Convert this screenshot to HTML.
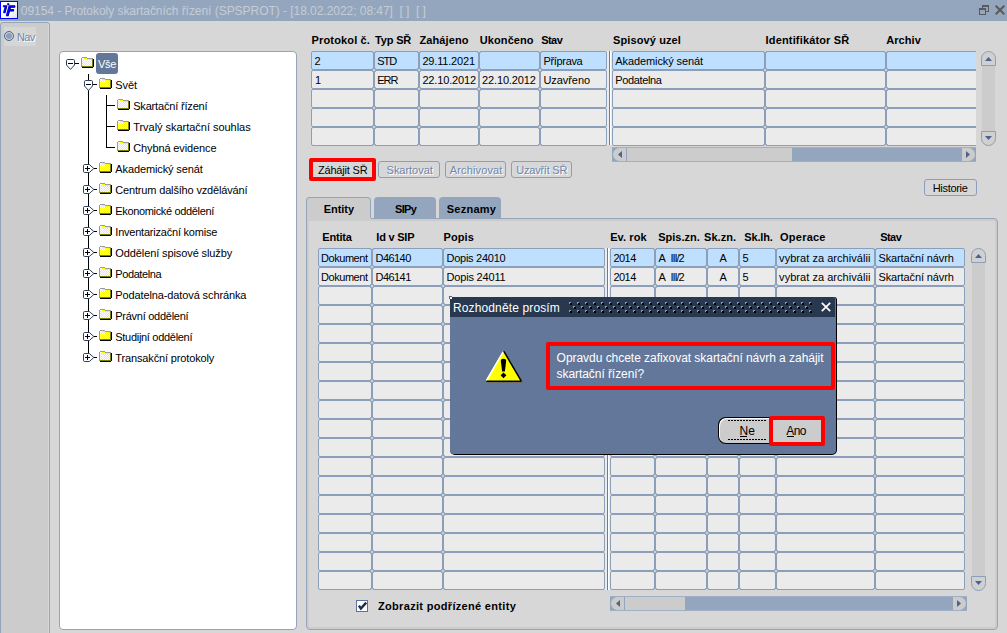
<!DOCTYPE html>
<html><head><meta charset="utf-8"><title>Protokoly</title>
<style>
*{box-sizing:border-box;margin:0;padding:0}
html,body{width:1007px;height:633px;overflow:hidden}
body{position:relative;background:#d7d7d7;font-family:"Liberation Sans",sans-serif;font-size:11px;color:#000}
.abs{position:absolute}
.c{position:absolute;border:1px solid #8b9fba;border-radius:2px;background:#ebebeb;height:19px}
.c.s{background:#bfdfff}
.h{position:absolute;font-weight:bold;white-space:pre;line-height:13px}
.t{position:absolute;white-space:pre;line-height:13px}
.btn{position:absolute;border:1px solid #8b9fba;border-radius:3px;height:17px}
.dis{color:#6f87ad;text-shadow:1px 1px 0 #fff}
.rg{position:absolute;width:1px;background:repeating-linear-gradient(to bottom,transparent 0,transparent 1px,#9cacc4 1px,#9cacc4 2px,transparent 2px,transparent 17px,#9cacc4 17px,#9cacc4 18px,transparent 18px,transparent 19px)}
.vl{position:absolute;width:1px;background:#000}
.hl{position:absolute;height:1px;background:#000}
.red{position:absolute;border:4px solid #ff0000;border-radius:2px}
svg{position:absolute;overflow:visible}
</style></head><body>

<div class="abs" style="left:0;top:0;width:1007px;height:21px;background:#94a6bd"></div>
<div class="abs" style="left:0;top:1px;width:18px;height:18px;border:1px solid #0000ff;background:linear-gradient(135deg,#fff 55%,#e0e0e0)"></div>
<svg style="left:0;top:0" width="18" height="20" viewBox="0 0 18 20"><g fill="#000" transform="translate(0.5,0.5)"><path d="M7.3 3.2 h1.8 l-0.45 1.6 h-1.8 Z"/><path d="M3.1 5.2 h3.9 l-2.1 7.5 h-1.9 l1.65 -5.9 h-2.0 Z"/><path d="M8.7 5.2 h6.4 l-0.55 2 h-4.1 l-0.5 1.8 h3.9 l-0.55 2 h-3.9 l-1.35 4.7 h-2.3 Z"/></g><g fill="#0000ff"><path d="M7.3 3.2 h1.8 l-0.45 1.6 h-1.8 Z"/><path d="M3.1 5.2 h3.9 l-2.1 7.5 h-1.9 l1.65 -5.9 h-2.0 Z"/><path d="M8.7 5.2 h6.4 l-0.55 2 h-4.1 l-0.5 1.8 h3.9 l-0.55 2 h-3.9 l-1.35 4.7 h-2.3 Z"/></g></svg>
<div class="t" style="left:20.80px;top:4px;font-size:12px;line-height:15px;letter-spacing:-0.041px;color:#c6ccd6;">09154 - Protokoly skartačních řízení (SPSPROT) - [18.02.2022; 08:47]  [ ]  [ ]</div>
<svg style="left:979px;top:5px" width="11" height="11" viewBox="0 0 11 11" shape-rendering="crispEdges"><g fill="none" stroke="#5a5a5a"><rect x="3.5" y="1" width="6" height="5.5"/><rect x="0.5" y="4" width="6" height="5.5" fill="#94a6bd"/></g><rect x="3" y="0" width="7" height="2" fill="#5a5a5a"/><rect x="0" y="3" width="7" height="2" fill="#5a5a5a"/></svg>
<svg style="left:995px;top:5px" width="10" height="10" viewBox="0 0 10 10"><path d="M0.7 0.7 L9.3 9.3 M9.3 0.7 L0.7 9.3" stroke="#5a5a5a" stroke-width="2" fill="none"/></svg>
<div class="abs" style="left:0;top:22px;width:50px;height:620px;border:1px solid #94a4bb;border-radius:3px;background:#cccccc;box-shadow:inset -1px 0 0 #d8d8d8"></div>
<div class="abs" style="left:4px;top:27px;width:32px;height:19px;background:#d6d6d6"></div>
<div class="abs" style="left:4px;top:31px;width:10px;height:10px;border-radius:50%;border:1px solid #50688c;background:#8b9fba;box-shadow:inset 0 0 0 1px #d6d6d6"></div>
<div class="t dis" style="left:17.00px;top:31px;letter-spacing:-0.640px;">Nav</div>
<div class="abs" style="left:59px;top:51px;width:238px;height:579px;border:1px solid #94a4bb;border-radius:4px;background:#fff"></div>
<svg width="0" height="0" style="left:0;top:0"><defs><pattern id="dz" width="2" height="2" patternUnits="userSpaceOnUse"><rect width="2" height="2" fill="#ffff00"/><rect x="0" y="0" width="1" height="1" fill="#fff"/><rect x="1" y="1" width="1" height="1" fill="#fff"/></pattern><pattern id="grip" width="8" height="8" patternUnits="userSpaceOnUse"><rect x="0" y="0" width="2" height="2" fill="#8d9bb3"/><rect x="1" y="1" width="2" height="2" fill="#000"/><rect x="4" y="4" width="2" height="2" fill="#8d9bb3"/><rect x="5" y="5" width="2" height="2" fill="#000"/></pattern></defs></svg>
<svg style="left:66px;top:59px" width="9" height="11" viewBox="0 0 9 11"><path d="M1.7 0.5 H7.3 Q8.5 0.5 8.5 1.7 V6 L4.5 10.4 L0.5 6 V1.7 Q0.5 0.5 1.7 0.5 Z" fill="#fff" stroke="#2d3e5e" stroke-width="1"/><rect x="2" y="4" width="5" height="1" fill="#000" shape-rendering="crispEdges"/></svg>
<div class="hl" style="left:75px;top:63px;width:4px"></div>
<svg style="left:81px;top:57px" width="13" height="11" viewBox="0 0 13 11" shape-rendering="crispEdges"><rect x="1" y="0" width="5" height="1" fill="#9a9a9a"/><rect x="0" y="1" width="1" height="9" fill="#9a9a9a"/><rect x="1" y="1" width="2" height="1" fill="#fff"/><rect x="3" y="1" width="3" height="1" fill="#ffff00"/><rect x="6" y="1" width="6" height="1" fill="#9a9a9a"/><rect x="1" y="2" width="5" height="1" fill="#eeeef4"/><rect x="6" y="2" width="5" height="1" fill="#ffff00"/><rect x="1" y="3" width="10" height="6" fill="url(#dz)"/><rect x="11" y="2" width="1" height="8" fill="#808000"/><rect x="12" y="2" width="1" height="8" fill="#000"/><rect x="1" y="9" width="11" height="1" fill="#808000"/><rect x="1" y="10" width="11" height="1" fill="#000"/></svg>
<div class="abs" style="left:96px;top:53px;width:22px;height:21px;background:#627799;border-radius:3px"></div>
<div class="t" style="left:98.00px;top:58px;letter-spacing:-0.238px;color:#fff;">Vše</div>
<div class="vl" style="left:88px;top:74px;height:284px"></div>
<svg style="left:84px;top:80px" width="9" height="11" viewBox="0 0 9 11"><path d="M1.7 0.5 H7.3 Q8.5 0.5 8.5 1.7 V6 L4.5 10.4 L0.5 6 V1.7 Q0.5 0.5 1.7 0.5 Z" fill="#fff" stroke="#2d3e5e" stroke-width="1"/><rect x="2" y="4" width="5" height="1" fill="#000" shape-rendering="crispEdges"/></svg>
<div class="hl" style="left:93px;top:84px;width:4px"></div>
<svg style="left:99px;top:78px" width="13" height="11" viewBox="0 0 13 11" shape-rendering="crispEdges"><rect x="1" y="0" width="5" height="1" fill="#9a9a9a"/><rect x="0" y="1" width="1" height="9" fill="#9a9a9a"/><rect x="1" y="1" width="2" height="1" fill="#fff"/><rect x="3" y="1" width="3" height="1" fill="#ffff00"/><rect x="6" y="1" width="6" height="1" fill="#9a9a9a"/><rect x="1" y="2" width="5" height="1" fill="#eeeef4"/><rect x="6" y="2" width="5" height="1" fill="#ffff00"/><rect x="1" y="3" width="10" height="6" fill="url(#dz)"/><rect x="11" y="2" width="1" height="8" fill="#808000"/><rect x="12" y="2" width="1" height="8" fill="#000"/><rect x="1" y="9" width="11" height="1" fill="#808000"/><rect x="1" y="10" width="11" height="1" fill="#000"/></svg>
<div class="t" style="left:115.30px;top:79px;letter-spacing:-0.100px;">Svět</div>
<div class="vl" style="left:106px;top:95px;height:53px"></div>
<div class="hl" style="left:106px;top:105px;width:9px"></div>
<svg style="left:117px;top:99px" width="13" height="11" viewBox="0 0 13 11" shape-rendering="crispEdges"><rect x="1" y="0" width="5" height="1" fill="#9a9a9a"/><rect x="0" y="1" width="1" height="9" fill="#9a9a9a"/><rect x="1" y="1" width="2" height="1" fill="#fff"/><rect x="3" y="1" width="3" height="1" fill="#ffff00"/><rect x="6" y="1" width="6" height="1" fill="#9a9a9a"/><rect x="1" y="2" width="5" height="1" fill="#eeeef4"/><rect x="6" y="2" width="5" height="1" fill="#ffff00"/><rect x="1" y="3" width="10" height="6" fill="url(#dz)"/><rect x="11" y="2" width="1" height="8" fill="#808000"/><rect x="12" y="2" width="1" height="8" fill="#000"/><rect x="1" y="9" width="11" height="1" fill="#808000"/><rect x="1" y="10" width="11" height="1" fill="#000"/></svg>
<div class="t" style="left:133.20px;top:100px;letter-spacing:-0.177px;">Skartační řízení</div>
<div class="hl" style="left:106px;top:126px;width:9px"></div>
<svg style="left:117px;top:120px" width="13" height="11" viewBox="0 0 13 11" shape-rendering="crispEdges"><rect x="1" y="0" width="5" height="1" fill="#9a9a9a"/><rect x="0" y="1" width="1" height="9" fill="#9a9a9a"/><rect x="1" y="1" width="2" height="1" fill="#fff"/><rect x="3" y="1" width="3" height="1" fill="#ffff00"/><rect x="6" y="1" width="6" height="1" fill="#9a9a9a"/><rect x="1" y="2" width="5" height="1" fill="#eeeef4"/><rect x="6" y="2" width="5" height="1" fill="#ffff00"/><rect x="1" y="3" width="10" height="6" fill="url(#dz)"/><rect x="11" y="2" width="1" height="8" fill="#808000"/><rect x="12" y="2" width="1" height="8" fill="#000"/><rect x="1" y="9" width="11" height="1" fill="#808000"/><rect x="1" y="10" width="11" height="1" fill="#000"/></svg>
<div class="t" style="left:133.20px;top:121px;letter-spacing:-0.030px;">Trvalý skartační souhlas</div>
<div class="hl" style="left:106px;top:147px;width:9px"></div>
<svg style="left:117px;top:141px" width="13" height="11" viewBox="0 0 13 11" shape-rendering="crispEdges"><rect x="1" y="0" width="5" height="1" fill="#9a9a9a"/><rect x="0" y="1" width="1" height="9" fill="#9a9a9a"/><rect x="1" y="1" width="2" height="1" fill="#fff"/><rect x="3" y="1" width="3" height="1" fill="#ffff00"/><rect x="6" y="1" width="6" height="1" fill="#9a9a9a"/><rect x="1" y="2" width="5" height="1" fill="#eeeef4"/><rect x="6" y="2" width="5" height="1" fill="#ffff00"/><rect x="1" y="3" width="10" height="6" fill="url(#dz)"/><rect x="11" y="2" width="1" height="8" fill="#808000"/><rect x="12" y="2" width="1" height="8" fill="#000"/><rect x="1" y="9" width="11" height="1" fill="#808000"/><rect x="1" y="10" width="11" height="1" fill="#000"/></svg>
<div class="t" style="left:133.20px;top:142px;letter-spacing:-0.116px;">Chybná evidence</div>
<svg style="left:83px;top:164px" width="12" height="9" viewBox="0 0 12 9"><path d="M1.7 0.5 H6.3 L10.9 4.5 L6.3 8.5 H1.7 Q0.5 8.5 0.5 7.3 V1.7 Q0.5 0.5 1.7 0.5 Z" fill="#fff" stroke="#2d3e5e" stroke-width="1"/><rect x="2" y="4" width="5" height="1" fill="#000" shape-rendering="crispEdges"/><rect x="4" y="2" width="1" height="5" fill="#000" shape-rendering="crispEdges"/></svg>
<div class="hl" style="left:94px;top:168px;width:3px"></div>
<svg style="left:99px;top:162px" width="13" height="11" viewBox="0 0 13 11" shape-rendering="crispEdges"><rect x="1" y="0" width="5" height="1" fill="#9a9a9a"/><rect x="0" y="1" width="1" height="9" fill="#9a9a9a"/><rect x="1" y="1" width="2" height="1" fill="#fff"/><rect x="3" y="1" width="3" height="1" fill="#ffff00"/><rect x="6" y="1" width="6" height="1" fill="#9a9a9a"/><rect x="1" y="2" width="5" height="1" fill="#eeeef4"/><rect x="6" y="2" width="5" height="1" fill="#ffff00"/><rect x="1" y="3" width="10" height="6" fill="url(#dz)"/><rect x="11" y="2" width="1" height="8" fill="#808000"/><rect x="12" y="2" width="1" height="8" fill="#000"/><rect x="1" y="9" width="11" height="1" fill="#808000"/><rect x="1" y="10" width="11" height="1" fill="#000"/></svg>
<div class="t" style="left:115.30px;top:163px;letter-spacing:-0.118px;">Akademický senát</div>
<svg style="left:83px;top:185px" width="12" height="9" viewBox="0 0 12 9"><path d="M1.7 0.5 H6.3 L10.9 4.5 L6.3 8.5 H1.7 Q0.5 8.5 0.5 7.3 V1.7 Q0.5 0.5 1.7 0.5 Z" fill="#fff" stroke="#2d3e5e" stroke-width="1"/><rect x="2" y="4" width="5" height="1" fill="#000" shape-rendering="crispEdges"/><rect x="4" y="2" width="1" height="5" fill="#000" shape-rendering="crispEdges"/></svg>
<div class="hl" style="left:94px;top:189px;width:3px"></div>
<svg style="left:99px;top:183px" width="13" height="11" viewBox="0 0 13 11" shape-rendering="crispEdges"><rect x="1" y="0" width="5" height="1" fill="#9a9a9a"/><rect x="0" y="1" width="1" height="9" fill="#9a9a9a"/><rect x="1" y="1" width="2" height="1" fill="#fff"/><rect x="3" y="1" width="3" height="1" fill="#ffff00"/><rect x="6" y="1" width="6" height="1" fill="#9a9a9a"/><rect x="1" y="2" width="5" height="1" fill="#eeeef4"/><rect x="6" y="2" width="5" height="1" fill="#ffff00"/><rect x="1" y="3" width="10" height="6" fill="url(#dz)"/><rect x="11" y="2" width="1" height="8" fill="#808000"/><rect x="12" y="2" width="1" height="8" fill="#000"/><rect x="1" y="9" width="11" height="1" fill="#808000"/><rect x="1" y="10" width="11" height="1" fill="#000"/></svg>
<div class="t" style="left:115.30px;top:184px;letter-spacing:-0.166px;">Centrum dalšího vzdělávání</div>
<svg style="left:83px;top:206px" width="12" height="9" viewBox="0 0 12 9"><path d="M1.7 0.5 H6.3 L10.9 4.5 L6.3 8.5 H1.7 Q0.5 8.5 0.5 7.3 V1.7 Q0.5 0.5 1.7 0.5 Z" fill="#fff" stroke="#2d3e5e" stroke-width="1"/><rect x="2" y="4" width="5" height="1" fill="#000" shape-rendering="crispEdges"/><rect x="4" y="2" width="1" height="5" fill="#000" shape-rendering="crispEdges"/></svg>
<div class="hl" style="left:94px;top:210px;width:3px"></div>
<svg style="left:99px;top:204px" width="13" height="11" viewBox="0 0 13 11" shape-rendering="crispEdges"><rect x="1" y="0" width="5" height="1" fill="#9a9a9a"/><rect x="0" y="1" width="1" height="9" fill="#9a9a9a"/><rect x="1" y="1" width="2" height="1" fill="#fff"/><rect x="3" y="1" width="3" height="1" fill="#ffff00"/><rect x="6" y="1" width="6" height="1" fill="#9a9a9a"/><rect x="1" y="2" width="5" height="1" fill="#eeeef4"/><rect x="6" y="2" width="5" height="1" fill="#ffff00"/><rect x="1" y="3" width="10" height="6" fill="url(#dz)"/><rect x="11" y="2" width="1" height="8" fill="#808000"/><rect x="12" y="2" width="1" height="8" fill="#000"/><rect x="1" y="9" width="11" height="1" fill="#808000"/><rect x="1" y="10" width="11" height="1" fill="#000"/></svg>
<div class="t" style="left:115.30px;top:205px;letter-spacing:-0.342px;">Ekonomické oddělení</div>
<svg style="left:83px;top:227px" width="12" height="9" viewBox="0 0 12 9"><path d="M1.7 0.5 H6.3 L10.9 4.5 L6.3 8.5 H1.7 Q0.5 8.5 0.5 7.3 V1.7 Q0.5 0.5 1.7 0.5 Z" fill="#fff" stroke="#2d3e5e" stroke-width="1"/><rect x="2" y="4" width="5" height="1" fill="#000" shape-rendering="crispEdges"/><rect x="4" y="2" width="1" height="5" fill="#000" shape-rendering="crispEdges"/></svg>
<div class="hl" style="left:94px;top:231px;width:3px"></div>
<svg style="left:99px;top:225px" width="13" height="11" viewBox="0 0 13 11" shape-rendering="crispEdges"><rect x="1" y="0" width="5" height="1" fill="#9a9a9a"/><rect x="0" y="1" width="1" height="9" fill="#9a9a9a"/><rect x="1" y="1" width="2" height="1" fill="#fff"/><rect x="3" y="1" width="3" height="1" fill="#ffff00"/><rect x="6" y="1" width="6" height="1" fill="#9a9a9a"/><rect x="1" y="2" width="5" height="1" fill="#eeeef4"/><rect x="6" y="2" width="5" height="1" fill="#ffff00"/><rect x="1" y="3" width="10" height="6" fill="url(#dz)"/><rect x="11" y="2" width="1" height="8" fill="#808000"/><rect x="12" y="2" width="1" height="8" fill="#000"/><rect x="1" y="9" width="11" height="1" fill="#808000"/><rect x="1" y="10" width="11" height="1" fill="#000"/></svg>
<div class="t" style="left:115.30px;top:226px;letter-spacing:-0.219px;">Inventarizační komise</div>
<svg style="left:83px;top:248px" width="12" height="9" viewBox="0 0 12 9"><path d="M1.7 0.5 H6.3 L10.9 4.5 L6.3 8.5 H1.7 Q0.5 8.5 0.5 7.3 V1.7 Q0.5 0.5 1.7 0.5 Z" fill="#fff" stroke="#2d3e5e" stroke-width="1"/><rect x="2" y="4" width="5" height="1" fill="#000" shape-rendering="crispEdges"/><rect x="4" y="2" width="1" height="5" fill="#000" shape-rendering="crispEdges"/></svg>
<div class="hl" style="left:94px;top:252px;width:3px"></div>
<svg style="left:99px;top:246px" width="13" height="11" viewBox="0 0 13 11" shape-rendering="crispEdges"><rect x="1" y="0" width="5" height="1" fill="#9a9a9a"/><rect x="0" y="1" width="1" height="9" fill="#9a9a9a"/><rect x="1" y="1" width="2" height="1" fill="#fff"/><rect x="3" y="1" width="3" height="1" fill="#ffff00"/><rect x="6" y="1" width="6" height="1" fill="#9a9a9a"/><rect x="1" y="2" width="5" height="1" fill="#eeeef4"/><rect x="6" y="2" width="5" height="1" fill="#ffff00"/><rect x="1" y="3" width="10" height="6" fill="url(#dz)"/><rect x="11" y="2" width="1" height="8" fill="#808000"/><rect x="12" y="2" width="1" height="8" fill="#000"/><rect x="1" y="9" width="11" height="1" fill="#808000"/><rect x="1" y="10" width="11" height="1" fill="#000"/></svg>
<div class="t" style="left:115.30px;top:247px;letter-spacing:-0.102px;">Oddělení spisové služby</div>
<svg style="left:83px;top:269px" width="12" height="9" viewBox="0 0 12 9"><path d="M1.7 0.5 H6.3 L10.9 4.5 L6.3 8.5 H1.7 Q0.5 8.5 0.5 7.3 V1.7 Q0.5 0.5 1.7 0.5 Z" fill="#fff" stroke="#2d3e5e" stroke-width="1"/><rect x="2" y="4" width="5" height="1" fill="#000" shape-rendering="crispEdges"/><rect x="4" y="2" width="1" height="5" fill="#000" shape-rendering="crispEdges"/></svg>
<div class="hl" style="left:94px;top:273px;width:3px"></div>
<svg style="left:99px;top:267px" width="13" height="11" viewBox="0 0 13 11" shape-rendering="crispEdges"><rect x="1" y="0" width="5" height="1" fill="#9a9a9a"/><rect x="0" y="1" width="1" height="9" fill="#9a9a9a"/><rect x="1" y="1" width="2" height="1" fill="#fff"/><rect x="3" y="1" width="3" height="1" fill="#ffff00"/><rect x="6" y="1" width="6" height="1" fill="#9a9a9a"/><rect x="1" y="2" width="5" height="1" fill="#eeeef4"/><rect x="6" y="2" width="5" height="1" fill="#ffff00"/><rect x="1" y="3" width="10" height="6" fill="url(#dz)"/><rect x="11" y="2" width="1" height="8" fill="#808000"/><rect x="12" y="2" width="1" height="8" fill="#000"/><rect x="1" y="9" width="11" height="1" fill="#808000"/><rect x="1" y="10" width="11" height="1" fill="#000"/></svg>
<div class="t" style="left:115.30px;top:268px;letter-spacing:-0.414px;">Podatelna</div>
<svg style="left:83px;top:290px" width="12" height="9" viewBox="0 0 12 9"><path d="M1.7 0.5 H6.3 L10.9 4.5 L6.3 8.5 H1.7 Q0.5 8.5 0.5 7.3 V1.7 Q0.5 0.5 1.7 0.5 Z" fill="#fff" stroke="#2d3e5e" stroke-width="1"/><rect x="2" y="4" width="5" height="1" fill="#000" shape-rendering="crispEdges"/><rect x="4" y="2" width="1" height="5" fill="#000" shape-rendering="crispEdges"/></svg>
<div class="hl" style="left:94px;top:294px;width:3px"></div>
<svg style="left:99px;top:288px" width="13" height="11" viewBox="0 0 13 11" shape-rendering="crispEdges"><rect x="1" y="0" width="5" height="1" fill="#9a9a9a"/><rect x="0" y="1" width="1" height="9" fill="#9a9a9a"/><rect x="1" y="1" width="2" height="1" fill="#fff"/><rect x="3" y="1" width="3" height="1" fill="#ffff00"/><rect x="6" y="1" width="6" height="1" fill="#9a9a9a"/><rect x="1" y="2" width="5" height="1" fill="#eeeef4"/><rect x="6" y="2" width="5" height="1" fill="#ffff00"/><rect x="1" y="3" width="10" height="6" fill="url(#dz)"/><rect x="11" y="2" width="1" height="8" fill="#808000"/><rect x="12" y="2" width="1" height="8" fill="#000"/><rect x="1" y="9" width="11" height="1" fill="#808000"/><rect x="1" y="10" width="11" height="1" fill="#000"/></svg>
<div class="t" style="left:115.30px;top:289px;letter-spacing:-0.116px;">Podatelna-datová schránka</div>
<svg style="left:83px;top:311px" width="12" height="9" viewBox="0 0 12 9"><path d="M1.7 0.5 H6.3 L10.9 4.5 L6.3 8.5 H1.7 Q0.5 8.5 0.5 7.3 V1.7 Q0.5 0.5 1.7 0.5 Z" fill="#fff" stroke="#2d3e5e" stroke-width="1"/><rect x="2" y="4" width="5" height="1" fill="#000" shape-rendering="crispEdges"/><rect x="4" y="2" width="1" height="5" fill="#000" shape-rendering="crispEdges"/></svg>
<div class="hl" style="left:94px;top:315px;width:3px"></div>
<svg style="left:99px;top:309px" width="13" height="11" viewBox="0 0 13 11" shape-rendering="crispEdges"><rect x="1" y="0" width="5" height="1" fill="#9a9a9a"/><rect x="0" y="1" width="1" height="9" fill="#9a9a9a"/><rect x="1" y="1" width="2" height="1" fill="#fff"/><rect x="3" y="1" width="3" height="1" fill="#ffff00"/><rect x="6" y="1" width="6" height="1" fill="#9a9a9a"/><rect x="1" y="2" width="5" height="1" fill="#eeeef4"/><rect x="6" y="2" width="5" height="1" fill="#ffff00"/><rect x="1" y="3" width="10" height="6" fill="url(#dz)"/><rect x="11" y="2" width="1" height="8" fill="#808000"/><rect x="12" y="2" width="1" height="8" fill="#000"/><rect x="1" y="9" width="11" height="1" fill="#808000"/><rect x="1" y="10" width="11" height="1" fill="#000"/></svg>
<div class="t" style="left:115.30px;top:310px;letter-spacing:-0.268px;">Právní oddělení</div>
<svg style="left:83px;top:332px" width="12" height="9" viewBox="0 0 12 9"><path d="M1.7 0.5 H6.3 L10.9 4.5 L6.3 8.5 H1.7 Q0.5 8.5 0.5 7.3 V1.7 Q0.5 0.5 1.7 0.5 Z" fill="#fff" stroke="#2d3e5e" stroke-width="1"/><rect x="2" y="4" width="5" height="1" fill="#000" shape-rendering="crispEdges"/><rect x="4" y="2" width="1" height="5" fill="#000" shape-rendering="crispEdges"/></svg>
<div class="hl" style="left:94px;top:336px;width:3px"></div>
<svg style="left:99px;top:330px" width="13" height="11" viewBox="0 0 13 11" shape-rendering="crispEdges"><rect x="1" y="0" width="5" height="1" fill="#9a9a9a"/><rect x="0" y="1" width="1" height="9" fill="#9a9a9a"/><rect x="1" y="1" width="2" height="1" fill="#fff"/><rect x="3" y="1" width="3" height="1" fill="#ffff00"/><rect x="6" y="1" width="6" height="1" fill="#9a9a9a"/><rect x="1" y="2" width="5" height="1" fill="#eeeef4"/><rect x="6" y="2" width="5" height="1" fill="#ffff00"/><rect x="1" y="3" width="10" height="6" fill="url(#dz)"/><rect x="11" y="2" width="1" height="8" fill="#808000"/><rect x="12" y="2" width="1" height="8" fill="#000"/><rect x="1" y="9" width="11" height="1" fill="#808000"/><rect x="1" y="10" width="11" height="1" fill="#000"/></svg>
<div class="t" style="left:115.30px;top:331px;letter-spacing:-0.297px;">Studijní oddělení</div>
<svg style="left:83px;top:353px" width="12" height="9" viewBox="0 0 12 9"><path d="M1.7 0.5 H6.3 L10.9 4.5 L6.3 8.5 H1.7 Q0.5 8.5 0.5 7.3 V1.7 Q0.5 0.5 1.7 0.5 Z" fill="#fff" stroke="#2d3e5e" stroke-width="1"/><rect x="2" y="4" width="5" height="1" fill="#000" shape-rendering="crispEdges"/><rect x="4" y="2" width="1" height="5" fill="#000" shape-rendering="crispEdges"/></svg>
<div class="hl" style="left:94px;top:357px;width:3px"></div>
<svg style="left:99px;top:351px" width="13" height="11" viewBox="0 0 13 11" shape-rendering="crispEdges"><rect x="1" y="0" width="5" height="1" fill="#9a9a9a"/><rect x="0" y="1" width="1" height="9" fill="#9a9a9a"/><rect x="1" y="1" width="2" height="1" fill="#fff"/><rect x="3" y="1" width="3" height="1" fill="#ffff00"/><rect x="6" y="1" width="6" height="1" fill="#9a9a9a"/><rect x="1" y="2" width="5" height="1" fill="#eeeef4"/><rect x="6" y="2" width="5" height="1" fill="#ffff00"/><rect x="1" y="3" width="10" height="6" fill="url(#dz)"/><rect x="11" y="2" width="1" height="8" fill="#808000"/><rect x="12" y="2" width="1" height="8" fill="#000"/><rect x="1" y="9" width="11" height="1" fill="#808000"/><rect x="1" y="10" width="11" height="1" fill="#000"/></svg>
<div class="t" style="left:115.30px;top:352px;letter-spacing:-0.142px;">Transakční protokoly</div>
<div class="c s" style="left:311px;top:51px;width:63px"></div>
<div class="c s" style="left:374px;top:51px;width:45px"></div>
<div class="c s" style="left:419px;top:51px;width:60px"></div>
<div class="c s" style="left:479px;top:51px;width:61px"></div>
<div class="c s" style="left:540px;top:51px;width:67px"></div>
<div class="c" style="left:311px;top:70px;width:63px"></div>
<div class="c" style="left:374px;top:70px;width:45px"></div>
<div class="c" style="left:419px;top:70px;width:60px"></div>
<div class="c" style="left:479px;top:70px;width:61px"></div>
<div class="c" style="left:540px;top:70px;width:67px"></div>
<div class="c" style="left:311px;top:89px;width:63px"></div>
<div class="c" style="left:374px;top:89px;width:45px"></div>
<div class="c" style="left:419px;top:89px;width:60px"></div>
<div class="c" style="left:479px;top:89px;width:61px"></div>
<div class="c" style="left:540px;top:89px;width:67px"></div>
<div class="c" style="left:311px;top:108px;width:63px"></div>
<div class="c" style="left:374px;top:108px;width:45px"></div>
<div class="c" style="left:419px;top:108px;width:60px"></div>
<div class="c" style="left:479px;top:108px;width:61px"></div>
<div class="c" style="left:540px;top:108px;width:67px"></div>
<div class="c" style="left:311px;top:127px;width:63px"></div>
<div class="c" style="left:374px;top:127px;width:45px"></div>
<div class="c" style="left:419px;top:127px;width:60px"></div>
<div class="c" style="left:479px;top:127px;width:61px"></div>
<div class="c" style="left:540px;top:127px;width:67px"></div>
<div class="h" style="left:311.60px;top:34px;letter-spacing:0.143px;">Protokol č.</div>
<div class="h" style="left:375.00px;top:34px;letter-spacing:-0.154px;">Typ SŘ</div>
<div class="h" style="left:419.40px;top:34px;letter-spacing:0.130px;">Zahájeno</div>
<div class="h" style="left:479.80px;top:34px;letter-spacing:0.088px;">Ukončeno</div>
<div class="h" style="left:541.20px;top:34px;letter-spacing:-0.537px;">Stav</div>
<div class="h" style="left:613.00px;top:34px;letter-spacing:0.113px;">Spisový uzel</div>
<div class="h" style="left:765.60px;top:34px;letter-spacing:0.154px;">Identifikátor SŘ</div>
<div class="h" style="left:886.20px;top:34px;letter-spacing:0.078px;">Archiv</div>
<div class="t" style="left:314.50px;top:55px;">2</div>
<div class="t" style="left:377.30px;top:55px;letter-spacing:-1.050px;">STD</div>
<div class="t" style="left:422.40px;top:55px;letter-spacing:-0.181px;">29.11.2021</div>
<div class="t" style="left:543.40px;top:55px;letter-spacing:-0.319px;">Příprava</div>
<div class="t" style="left:615.30px;top:55px;letter-spacing:-0.098px;">Akademický senát</div>
<div class="t" style="left:315.00px;top:74px;">1</div>
<div class="t" style="left:377.30px;top:74px;letter-spacing:-1.050px;">ERR</div>
<div class="t" style="left:422.40px;top:74px;letter-spacing:-0.151px;">22.10.2012</div>
<div class="t" style="left:482.10px;top:74px;letter-spacing:-0.151px;">22.10.2012</div>
<div class="t" style="left:543.40px;top:74px;letter-spacing:-0.054px;">Uzavřeno</div>
<div class="t" style="left:615.30px;top:74px;letter-spacing:-0.376px;">Podatelna</div>
<div class="rg" style="left:372px;top:51px;height:95px"></div>
<div class="rg" style="left:375px;top:51px;height:95px"></div>
<div class="rg" style="left:417px;top:51px;height:95px"></div>
<div class="rg" style="left:420px;top:51px;height:95px"></div>
<div class="rg" style="left:477px;top:51px;height:95px"></div>
<div class="rg" style="left:480px;top:51px;height:95px"></div>
<div class="rg" style="left:538px;top:51px;height:95px"></div>
<div class="rg" style="left:541px;top:51px;height:95px"></div>
<div class="abs" style="left:607px;top:51px;width:5px;height:94px;background:#ececec"></div>
<div class="abs" style="left:609px;top:51px;width:1px;height:94px;background:#7a7a7a"></div>
<div class="abs" style="left:610px;top:51px;width:1px;height:94px;background:#fff"></div>
<div class="abs" style="left:612px;top:51px;width:364px;height:95px;overflow:hidden">
<div class="c s" style="left:0px;top:0px;width:153px"></div>
<div class="c s" style="left:153px;top:0px;width:121px"></div>
<div class="c s" style="left:274px;top:0px;width:127px"></div>
<div class="c" style="left:0px;top:19px;width:153px"></div>
<div class="c" style="left:153px;top:19px;width:121px"></div>
<div class="c" style="left:274px;top:19px;width:127px"></div>
<div class="c" style="left:0px;top:38px;width:153px"></div>
<div class="c" style="left:153px;top:38px;width:121px"></div>
<div class="c" style="left:274px;top:38px;width:127px"></div>
<div class="c" style="left:0px;top:57px;width:153px"></div>
<div class="c" style="left:153px;top:57px;width:121px"></div>
<div class="c" style="left:274px;top:57px;width:127px"></div>
<div class="c" style="left:0px;top:76px;width:153px"></div>
<div class="c" style="left:153px;top:76px;width:121px"></div>
<div class="c" style="left:274px;top:76px;width:127px"></div>
</div>
<div class="rg" style="left:763px;top:51px;height:95px"></div>
<div class="rg" style="left:766px;top:51px;height:95px"></div>
<div class="rg" style="left:884px;top:51px;height:95px"></div>
<div class="rg" style="left:887px;top:51px;height:95px"></div>
<div class="t" style="left:615.30px;top:55px;letter-spacing:-0.098px;">Akademický senát</div>
<div class="t" style="left:615.30px;top:74px;letter-spacing:-0.376px;">Podatelna</div>
<div class="abs" style="left:612px;top:147px;width:364px;height:15px;background:#94a6bd;border-top:1px solid #9fb0c6;border-bottom:1px solid #9fb0c6"></div>
<div class="abs" style="left:613px;top:148px;width:14px;height:13px;background:#cccccc;border-radius:7px 0 0 7px"></div>
<svg style="left:618px;top:151px" width="4" height="7" viewBox="0 0 4 7"><path d="M4 0 L0 3.5 L4 7 Z" fill="#4a6391"/></svg>
<div class="abs" style="left:626px;top:148px;width:1px;height:13px;background:#94a6bd"></div>
<div class="abs" style="left:627px;top:148px;width:165px;height:13px;background:#cccccc"></div>
<div class="abs" style="left:962px;top:148px;width:13px;height:13px;background:#cccccc;border-radius:0 7px 7px 0"></div>
<svg style="left:966px;top:151px" width="4" height="7" viewBox="0 0 4 7"><path d="M0 0 L4 3.5 L0 7 Z" fill="#4a6391"/></svg>
<div class="abs" style="left:982px;top:59px;width:13px;height:79px;background:#cccccc"></div>
<div class="abs" style="left:981px;top:51px;width:15px;height:15px;background:#d0d0d0;border:1px solid #8b9fba;border-radius:8px 8px 0 0"></div>
<svg style="left:985px;top:57px" width="7" height="4" viewBox="0 0 7 4"><path d="M0 4 L3.5 0 L7 4 Z" fill="#4a6391"/></svg>
<div class="abs" style="left:981px;top:131px;width:15px;height:15px;background:#d0d0d0;border:1px solid #8b9fba;border-radius:0 0 8px 8px"></div>
<svg style="left:985px;top:136px" width="7" height="4" viewBox="0 0 7 4"><path d="M0 0 L3.5 4 L7 0 Z" fill="#4a6391"/></svg>
<div class="t" style="left:318.00px;top:164px;letter-spacing:-0.197px;">Záhájit SŘ</div>
<div class="red" style="left:309px;top:158px;width:67px;height:23px"></div>
<div class="btn" style="left:378px;top:161px;width:62px"></div>
<div class="t dis" style="left:386.60px;top:164px;letter-spacing:-0.034px;">Skartovat</div>
<div class="btn" style="left:445px;top:161px;width:61px"></div>
<div class="t dis" style="left:449.80px;top:164px;letter-spacing:0.137px;">Archivovat</div>
<div class="btn" style="left:511px;top:161px;width:61px"></div>
<div class="t dis" style="left:516.30px;top:164px;letter-spacing:-0.232px;">Uzavřít SŘ</div>
<div class="btn" style="left:924px;top:179px;width:53px"></div>
<div class="t" style="left:932.70px;top:182px;letter-spacing:-0.313px;">Historie</div>
<div class="abs" style="left:306px;top:218px;width:692px;height:412px;border:1px solid #94a4bb;border-radius:0 4px 4px 4px;background:#d7d7d7;box-shadow:inset 0 0 0 2px #cccccc"></div>
<div class="abs" style="left:374px;top:197px;width:62px;height:21px;background:#94a6bd;border-radius:4px 4px 0 0"></div>
<div class="abs" style="left:439px;top:197px;width:62px;height:21px;background:#94a6bd;border-radius:4px 4px 0 0"></div>
<div class="abs" style="left:306px;top:197px;width:65px;height:22px;background:#cccccc;border:1px solid #94a4bb;border-bottom:none;border-radius:4px 4px 0 0"></div>
<div class="abs" style="left:307px;top:218px;width:64px;height:3px;background:#cccccc"></div>
<div class="h" style="left:323.80px;top:203px;letter-spacing:-0.056px;">Entity</div>
<div class="h" style="left:395.10px;top:203px;letter-spacing:-0.690px;">SIPy</div>
<div class="h" style="left:446.80px;top:203px;letter-spacing:0.236px;">Seznamy</div>
<div class="c s" style="left:318px;top:248px;width:54px"></div>
<div class="c s" style="left:372px;top:248px;width:71px"></div>
<div class="c s" style="left:443px;top:248px;width:162px"></div>
<div class="c s" style="left:610px;top:248px;width:45px"></div>
<div class="c s" style="left:655px;top:248px;width:52px"></div>
<div class="c s" style="left:707px;top:248px;width:32px"></div>
<div class="c s" style="left:739px;top:248px;width:37px"></div>
<div class="c s" style="left:776px;top:248px;width:99px"></div>
<div class="c s" style="left:875px;top:248px;width:90px"></div>
<div class="c" style="left:318px;top:267px;width:54px"></div>
<div class="c" style="left:372px;top:267px;width:71px"></div>
<div class="c" style="left:443px;top:267px;width:162px"></div>
<div class="c" style="left:610px;top:267px;width:45px"></div>
<div class="c" style="left:655px;top:267px;width:52px"></div>
<div class="c" style="left:707px;top:267px;width:32px"></div>
<div class="c" style="left:739px;top:267px;width:37px"></div>
<div class="c" style="left:776px;top:267px;width:99px"></div>
<div class="c" style="left:875px;top:267px;width:90px"></div>
<div class="c" style="left:318px;top:286px;width:54px"></div>
<div class="c" style="left:372px;top:286px;width:71px"></div>
<div class="c" style="left:443px;top:286px;width:162px"></div>
<div class="c" style="left:610px;top:286px;width:45px"></div>
<div class="c" style="left:655px;top:286px;width:52px"></div>
<div class="c" style="left:707px;top:286px;width:32px"></div>
<div class="c" style="left:739px;top:286px;width:37px"></div>
<div class="c" style="left:776px;top:286px;width:99px"></div>
<div class="c" style="left:875px;top:286px;width:90px"></div>
<div class="c" style="left:318px;top:305px;width:54px"></div>
<div class="c" style="left:372px;top:305px;width:71px"></div>
<div class="c" style="left:443px;top:305px;width:162px"></div>
<div class="c" style="left:610px;top:305px;width:45px"></div>
<div class="c" style="left:655px;top:305px;width:52px"></div>
<div class="c" style="left:707px;top:305px;width:32px"></div>
<div class="c" style="left:739px;top:305px;width:37px"></div>
<div class="c" style="left:776px;top:305px;width:99px"></div>
<div class="c" style="left:875px;top:305px;width:90px"></div>
<div class="c" style="left:318px;top:324px;width:54px"></div>
<div class="c" style="left:372px;top:324px;width:71px"></div>
<div class="c" style="left:443px;top:324px;width:162px"></div>
<div class="c" style="left:610px;top:324px;width:45px"></div>
<div class="c" style="left:655px;top:324px;width:52px"></div>
<div class="c" style="left:707px;top:324px;width:32px"></div>
<div class="c" style="left:739px;top:324px;width:37px"></div>
<div class="c" style="left:776px;top:324px;width:99px"></div>
<div class="c" style="left:875px;top:324px;width:90px"></div>
<div class="c" style="left:318px;top:343px;width:54px"></div>
<div class="c" style="left:372px;top:343px;width:71px"></div>
<div class="c" style="left:443px;top:343px;width:162px"></div>
<div class="c" style="left:610px;top:343px;width:45px"></div>
<div class="c" style="left:655px;top:343px;width:52px"></div>
<div class="c" style="left:707px;top:343px;width:32px"></div>
<div class="c" style="left:739px;top:343px;width:37px"></div>
<div class="c" style="left:776px;top:343px;width:99px"></div>
<div class="c" style="left:875px;top:343px;width:90px"></div>
<div class="c" style="left:318px;top:362px;width:54px"></div>
<div class="c" style="left:372px;top:362px;width:71px"></div>
<div class="c" style="left:443px;top:362px;width:162px"></div>
<div class="c" style="left:610px;top:362px;width:45px"></div>
<div class="c" style="left:655px;top:362px;width:52px"></div>
<div class="c" style="left:707px;top:362px;width:32px"></div>
<div class="c" style="left:739px;top:362px;width:37px"></div>
<div class="c" style="left:776px;top:362px;width:99px"></div>
<div class="c" style="left:875px;top:362px;width:90px"></div>
<div class="c" style="left:318px;top:381px;width:54px"></div>
<div class="c" style="left:372px;top:381px;width:71px"></div>
<div class="c" style="left:443px;top:381px;width:162px"></div>
<div class="c" style="left:610px;top:381px;width:45px"></div>
<div class="c" style="left:655px;top:381px;width:52px"></div>
<div class="c" style="left:707px;top:381px;width:32px"></div>
<div class="c" style="left:739px;top:381px;width:37px"></div>
<div class="c" style="left:776px;top:381px;width:99px"></div>
<div class="c" style="left:875px;top:381px;width:90px"></div>
<div class="c" style="left:318px;top:400px;width:54px"></div>
<div class="c" style="left:372px;top:400px;width:71px"></div>
<div class="c" style="left:443px;top:400px;width:162px"></div>
<div class="c" style="left:610px;top:400px;width:45px"></div>
<div class="c" style="left:655px;top:400px;width:52px"></div>
<div class="c" style="left:707px;top:400px;width:32px"></div>
<div class="c" style="left:739px;top:400px;width:37px"></div>
<div class="c" style="left:776px;top:400px;width:99px"></div>
<div class="c" style="left:875px;top:400px;width:90px"></div>
<div class="c" style="left:318px;top:419px;width:54px"></div>
<div class="c" style="left:372px;top:419px;width:71px"></div>
<div class="c" style="left:443px;top:419px;width:162px"></div>
<div class="c" style="left:610px;top:419px;width:45px"></div>
<div class="c" style="left:655px;top:419px;width:52px"></div>
<div class="c" style="left:707px;top:419px;width:32px"></div>
<div class="c" style="left:739px;top:419px;width:37px"></div>
<div class="c" style="left:776px;top:419px;width:99px"></div>
<div class="c" style="left:875px;top:419px;width:90px"></div>
<div class="c" style="left:318px;top:438px;width:54px"></div>
<div class="c" style="left:372px;top:438px;width:71px"></div>
<div class="c" style="left:443px;top:438px;width:162px"></div>
<div class="c" style="left:610px;top:438px;width:45px"></div>
<div class="c" style="left:655px;top:438px;width:52px"></div>
<div class="c" style="left:707px;top:438px;width:32px"></div>
<div class="c" style="left:739px;top:438px;width:37px"></div>
<div class="c" style="left:776px;top:438px;width:99px"></div>
<div class="c" style="left:875px;top:438px;width:90px"></div>
<div class="c" style="left:318px;top:457px;width:54px"></div>
<div class="c" style="left:372px;top:457px;width:71px"></div>
<div class="c" style="left:443px;top:457px;width:162px"></div>
<div class="c" style="left:610px;top:457px;width:45px"></div>
<div class="c" style="left:655px;top:457px;width:52px"></div>
<div class="c" style="left:707px;top:457px;width:32px"></div>
<div class="c" style="left:739px;top:457px;width:37px"></div>
<div class="c" style="left:776px;top:457px;width:99px"></div>
<div class="c" style="left:875px;top:457px;width:90px"></div>
<div class="c" style="left:318px;top:476px;width:54px"></div>
<div class="c" style="left:372px;top:476px;width:71px"></div>
<div class="c" style="left:443px;top:476px;width:162px"></div>
<div class="c" style="left:610px;top:476px;width:45px"></div>
<div class="c" style="left:655px;top:476px;width:52px"></div>
<div class="c" style="left:707px;top:476px;width:32px"></div>
<div class="c" style="left:739px;top:476px;width:37px"></div>
<div class="c" style="left:776px;top:476px;width:99px"></div>
<div class="c" style="left:875px;top:476px;width:90px"></div>
<div class="c" style="left:318px;top:495px;width:54px"></div>
<div class="c" style="left:372px;top:495px;width:71px"></div>
<div class="c" style="left:443px;top:495px;width:162px"></div>
<div class="c" style="left:610px;top:495px;width:45px"></div>
<div class="c" style="left:655px;top:495px;width:52px"></div>
<div class="c" style="left:707px;top:495px;width:32px"></div>
<div class="c" style="left:739px;top:495px;width:37px"></div>
<div class="c" style="left:776px;top:495px;width:99px"></div>
<div class="c" style="left:875px;top:495px;width:90px"></div>
<div class="c" style="left:318px;top:514px;width:54px"></div>
<div class="c" style="left:372px;top:514px;width:71px"></div>
<div class="c" style="left:443px;top:514px;width:162px"></div>
<div class="c" style="left:610px;top:514px;width:45px"></div>
<div class="c" style="left:655px;top:514px;width:52px"></div>
<div class="c" style="left:707px;top:514px;width:32px"></div>
<div class="c" style="left:739px;top:514px;width:37px"></div>
<div class="c" style="left:776px;top:514px;width:99px"></div>
<div class="c" style="left:875px;top:514px;width:90px"></div>
<div class="c" style="left:318px;top:533px;width:54px"></div>
<div class="c" style="left:372px;top:533px;width:71px"></div>
<div class="c" style="left:443px;top:533px;width:162px"></div>
<div class="c" style="left:610px;top:533px;width:45px"></div>
<div class="c" style="left:655px;top:533px;width:52px"></div>
<div class="c" style="left:707px;top:533px;width:32px"></div>
<div class="c" style="left:739px;top:533px;width:37px"></div>
<div class="c" style="left:776px;top:533px;width:99px"></div>
<div class="c" style="left:875px;top:533px;width:90px"></div>
<div class="c" style="left:318px;top:552px;width:54px"></div>
<div class="c" style="left:372px;top:552px;width:71px"></div>
<div class="c" style="left:443px;top:552px;width:162px"></div>
<div class="c" style="left:610px;top:552px;width:45px"></div>
<div class="c" style="left:655px;top:552px;width:52px"></div>
<div class="c" style="left:707px;top:552px;width:32px"></div>
<div class="c" style="left:739px;top:552px;width:37px"></div>
<div class="c" style="left:776px;top:552px;width:99px"></div>
<div class="c" style="left:875px;top:552px;width:90px"></div>
<div class="c" style="left:318px;top:571px;width:54px"></div>
<div class="c" style="left:372px;top:571px;width:71px"></div>
<div class="c" style="left:443px;top:571px;width:162px"></div>
<div class="c" style="left:610px;top:571px;width:45px"></div>
<div class="c" style="left:655px;top:571px;width:52px"></div>
<div class="c" style="left:707px;top:571px;width:32px"></div>
<div class="c" style="left:739px;top:571px;width:37px"></div>
<div class="c" style="left:776px;top:571px;width:99px"></div>
<div class="c" style="left:875px;top:571px;width:90px"></div>
<div class="h" style="left:322.30px;top:231px;letter-spacing:-0.187px;">Entita</div>
<div class="h" style="left:376.30px;top:231px;letter-spacing:-0.216px;">Id v SIP</div>
<div class="h" style="left:443.60px;top:231px;letter-spacing:0.056px;">Popis</div>
<div class="h" style="left:610.20px;top:231px;letter-spacing:0.098px;">Ev. rok</div>
<div class="h" style="left:658.20px;top:231px;letter-spacing:0.017px;">Spis.zn.</div>
<div class="h" style="left:704.10px;top:231px;letter-spacing:0.022px;">Sk.zn.</div>
<div class="h" style="left:744.30px;top:231px;letter-spacing:-0.154px;">Sk.lh.</div>
<div class="h" style="left:780.10px;top:231px;letter-spacing:0.224px;">Operace</div>
<div class="h" style="left:880.20px;top:231px;letter-spacing:-0.537px;">Stav</div>
<div class="t" style="left:321.10px;top:252px;letter-spacing:-0.466px;">Dokument</div>
<div class="t" style="left:375.50px;top:252px;letter-spacing:-0.551px;">D46140</div>
<div class="t" style="left:446.60px;top:252px;letter-spacing:-0.277px;">Dopis 24010</div>
<div class="t" style="left:613.40px;top:252px;letter-spacing:-0.525px;">2014</div>
<div class="t" style="left:658.40px;top:252px;">A</div>
<div class="t" style="left:670.40px;top:252px;letter-spacing:-1.050px;">III/2</div>
<div class="t" style="left:719.40px;top:252px;">A</div>
<div class="t" style="left:742.40px;top:252px;">5</div>
<div class="t" style="left:779.10px;top:252px;letter-spacing:0.043px;">vybrat za archiválii</div>
<div class="t" style="left:878.50px;top:252px;letter-spacing:-0.125px;">Skartační návrh</div>
<div class="t" style="left:321.10px;top:271px;letter-spacing:-0.466px;">Dokument</div>
<div class="t" style="left:375.50px;top:271px;letter-spacing:-0.551px;">D46141</div>
<div class="t" style="left:446.60px;top:271px;letter-spacing:-0.194px;">Dopis 24011</div>
<div class="t" style="left:613.40px;top:271px;letter-spacing:-0.525px;">2014</div>
<div class="t" style="left:658.40px;top:271px;">A</div>
<div class="t" style="left:670.40px;top:271px;letter-spacing:-1.050px;">III/2</div>
<div class="t" style="left:719.40px;top:271px;">A</div>
<div class="t" style="left:742.40px;top:271px;">5</div>
<div class="t" style="left:779.10px;top:271px;letter-spacing:0.043px;">vybrat za archiválii</div>
<div class="t" style="left:878.50px;top:271px;letter-spacing:-0.125px;">Skartační návrh</div>
<div class="abs" style="left:605px;top:248px;width:5px;height:342px;background:#ececec"></div>
<div class="abs" style="left:607px;top:248px;width:1px;height:342px;background:#7a7a7a"></div>
<div class="abs" style="left:608px;top:248px;width:1px;height:342px;background:#fff"></div>
<div class="rg" style="left:370px;top:248px;height:342px"></div>
<div class="rg" style="left:373px;top:248px;height:342px"></div>
<div class="rg" style="left:441px;top:248px;height:342px"></div>
<div class="rg" style="left:444px;top:248px;height:342px"></div>
<div class="rg" style="left:653px;top:248px;height:342px"></div>
<div class="rg" style="left:656px;top:248px;height:342px"></div>
<div class="rg" style="left:705px;top:248px;height:342px"></div>
<div class="rg" style="left:708px;top:248px;height:342px"></div>
<div class="rg" style="left:737px;top:248px;height:342px"></div>
<div class="rg" style="left:740px;top:248px;height:342px"></div>
<div class="rg" style="left:774px;top:248px;height:342px"></div>
<div class="rg" style="left:777px;top:248px;height:342px"></div>
<div class="rg" style="left:873px;top:248px;height:342px"></div>
<div class="rg" style="left:876px;top:248px;height:342px"></div>
<div class="abs" style="left:972px;top:256px;width:13px;height:327px;background:#cccccc"></div>
<div class="abs" style="left:971px;top:248px;width:15px;height:15px;background:#d0d0d0;border:1px solid #8b9fba;border-radius:8px 8px 0 0"></div>
<svg style="left:975px;top:254px" width="7" height="4" viewBox="0 0 7 4"><path d="M0 4 L3.5 0 L7 4 Z" fill="#4a6391"/></svg>
<div class="abs" style="left:971px;top:576px;width:15px;height:15px;background:#d0d0d0;border:1px solid #8b9fba;border-radius:0 0 8px 8px"></div>
<svg style="left:975px;top:581px" width="7" height="4" viewBox="0 0 7 4"><path d="M0 0 L3.5 4 L7 0 Z" fill="#4a6391"/></svg>
<div class="abs" style="left:610px;top:596px;width:357px;height:15px;background:#94a6bd;border-top:1px solid #9fb0c6;border-bottom:1px solid #9fb0c6"></div>
<div class="abs" style="left:611px;top:597px;width:14px;height:13px;background:#cccccc;border-radius:7px 0 0 7px"></div>
<svg style="left:616px;top:600px" width="4" height="7" viewBox="0 0 4 7"><path d="M4 0 L0 3.5 L4 7 Z" fill="#4a6391"/></svg>
<div class="abs" style="left:624px;top:597px;width:1px;height:13px;background:#94a6bd"></div>
<div class="abs" style="left:625px;top:597px;width:60px;height:13px;background:#cccccc"></div>
<div class="abs" style="left:953px;top:597px;width:13px;height:13px;background:#cccccc;border-radius:0 7px 7px 0"></div>
<svg style="left:957px;top:600px" width="4" height="7" viewBox="0 0 4 7"><path d="M0 0 L4 3.5 L0 7 Z" fill="#4a6391"/></svg>
<div class="abs" style="left:356px;top:600px;width:12px;height:12px;background:#fff;border:1px solid #5b7399"></div>
<svg style="left:357px;top:601px" width="10" height="10" viewBox="0 0 10 10"><path d="M1.9 4.6 L3.9 7.6 L9.2 1.6" stroke="#1c2c4c" stroke-width="2.4" fill="none"/></svg>
<div class="h" style="left:378.00px;top:600px;letter-spacing:0.317px;">Zobrazit podřízené entity</div>
<div class="abs" style="left:450px;top:297px;width:387px;height:158px;background:#000;border-radius:3px 3px 5px 5px"></div>
<div class="abs" style="left:450px;top:297px;width:386px;height:157px;background:#627799;border-radius:3px 3px 4px 4px"></div>
<div class="abs" style="left:450px;top:297px;width:385px;height:20px;background:#28384f;border-radius:2px 2px 0 0"></div>
<div class="abs" style="left:449px;top:296px;width:3px;height:3px;border-left:1px solid #4a6391;border-top:1px solid #4a6391;background:#f4f4f4"></div>
<div class="t" style="left:452.90px;top:301px;font-size:12px;line-height:15px;letter-spacing:0.138px;color:#fff;">Rozhodněte prosím</div>
<svg style="left:569px;top:302px" width="243" height="11" viewBox="0 0 243 11" shape-rendering="crispEdges"><rect width="243" height="11" fill="url(#grip)"/></svg>
<svg style="left:821px;top:302px" width="10" height="10" viewBox="0 0 10 10"><path d="M0.8 0.8 L9.2 9.2 M9.2 0.8 L0.8 9.2" stroke="#fff" stroke-width="1.7" fill="none"/></svg>
<svg style="left:485px;top:350px" width="39" height="34" viewBox="0 0 39 34"><path d="M3.5 32.2 H37 L36.1 30" stroke="#6b6b6b" stroke-width="1.4" fill="none" stroke-linecap="round"/><path d="M18.5 1.5 L35.5 30.5 H1.5 Z" fill="#ffff00" stroke="#ffff00" stroke-width="1.2" stroke-linejoin="round"/><path d="M1.8 30 L18 2.2" stroke="#fff" stroke-width="1.5" stroke-linecap="round" fill="none"/><path d="M19 1.6 L35.9 30.4 Q36.3 31.2 35.5 31.2 H1.9" stroke="#000" stroke-width="1.5" stroke-linecap="round" stroke-linejoin="round" fill="none"/><path d="M15.8 11 Q15.8 8.8 18.5 8.8 Q21.2 8.8 21.2 11 L19.9 21.6 H17.1 Z" fill="#000"/><path d="M18.5 22.4 L21.4 25.3 L18.5 28.2 L15.6 25.3 Z" fill="#000"/></svg>
<div class="red" style="left:546px;top:342px;width:289px;height:48px"></div>
<div class="t" style="left:556.60px;top:350px;font-size:12px;line-height:16px;letter-spacing:-0.039px;color:#fff;">Opravdu chcete zafixovat skartační návrh a zahájit</div>
<div class="t" style="left:556.60px;top:366px;font-size:12px;line-height:16px;letter-spacing:-0.067px;color:#fff;">skartační řízení?</div>
<div class="abs" style="left:718px;top:417px;width:54px;height:27px;background:#cccccc;border:1px solid #000;border-right:none;border-radius:8px 0 0 8px;box-shadow:inset 1px 1px 0 #fff"></div>
<svg style="left:728px;top:420px" width="39" height="20" viewBox="0 0 39 20" shape-rendering="crispEdges"><path d="M0 0.5 H39 M0 19.5 H39" stroke="#000" stroke-width="1" stroke-dasharray="2 1" fill="none"/></svg>
<div class="t" style="left:739.60px;top:424px;font-size:12px;line-height:15px;">Ne</div>
<div class="abs" style="left:740px;top:436px;width:7px;height:1px;background:#000"></div>
<div class="abs" style="left:772px;top:418px;width:50px;height:25px;background:#cccccc;border-right:1px solid #50688c;border-bottom:1px solid #50688c"></div>
<div class="t" style="left:786.30px;top:424px;font-size:12px;line-height:15px;letter-spacing:-0.580px;">Ano</div>
<div class="abs" style="left:787px;top:436px;width:7px;height:1px;background:#000"></div>
<div class="red" style="left:769px;top:416px;width:56px;height:30px"></div>
</body></html>
